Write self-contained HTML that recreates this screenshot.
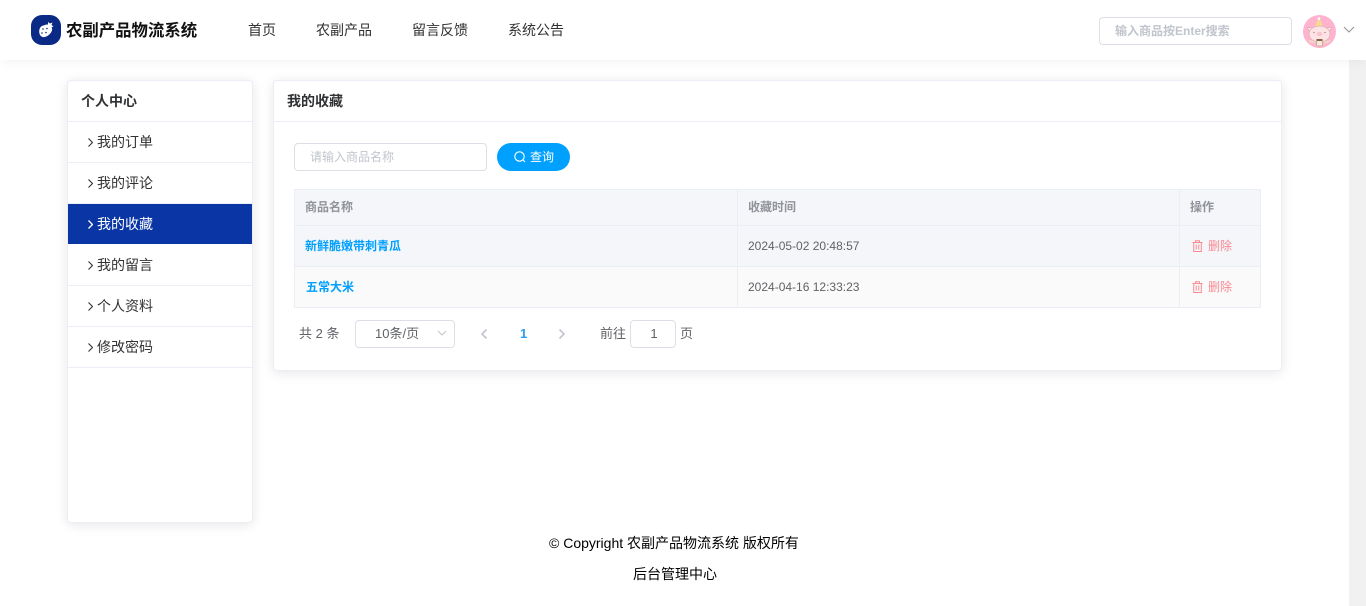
<!DOCTYPE html>
<html lang="zh-CN">
<head>
<meta charset="utf-8">
<title>农副产品物流系统</title>
<style>
html,body{margin:0;padding:0;width:1366px;height:606px;overflow:hidden;background:#fff;}
body{position:relative;font-family:"Liberation Sans","WenQuanYi Zen Hei","Noto Sans CJK SC",sans-serif;font-size:14px;color:#303133;}
.a{position:absolute;white-space:nowrap;}
.box{position:absolute;box-sizing:border-box;}
.sb{position:absolute;left:1349px;top:60px;width:17px;height:546px;background:#f1f1f1;}
.hd{position:absolute;left:0;top:0;width:1366px;height:60px;background:#fff;box-shadow:0 2px 12px rgba(0,0,0,.05);}
.nav{position:absolute;top:20px;line-height:20px;color:#303133;font-size:14px;}
.card{position:absolute;box-sizing:border-box;background:#fff;border:1px solid #ebeef5;border-radius:4px;box-shadow:0 2px 12px rgba(0,0,0,.1);}
.mi{position:absolute;left:0;width:184px;height:41px;box-sizing:border-box;border-bottom:1px solid #ebeef5;line-height:40px;font-size:14px;color:#303133;}
.mi svg{position:absolute;left:20px;top:16px;}
.mi span{position:absolute;left:29px;top:0;}
.mi.on{background:#0a36a5;color:#fff;border-bottom:none;}
.inp{position:absolute;box-sizing:border-box;background:#fff;border:1px solid #dcdfe6;border-radius:4px;color:#c0c4cc;font-size:12px;}
.tl{position:absolute;background:#ebeef5;}
.th{position:absolute;top:199px;line-height:16px;font-size:12px;font-weight:bold;color:#909399;}
.td{position:absolute;line-height:16px;font-size:12px;color:#606266;}
.link{position:absolute;line-height:16px;font-size:12px;font-weight:bold;color:#00a0ff;}
.del{position:absolute;left:1208px;line-height:16px;font-size:12px;color:#f98a94;}
.pg{position:absolute;line-height:16px;font-size:13px;color:#606266;}
</style>
</head>
<body>
<div class="sb"></div>

<div class="card" style="left:67px;top:80px;width:186px;height:443px;">
  <div class="a" style="left:13px;top:12px;line-height:17px;font-size:14px;font-weight:bold;color:#303133;">个人中心</div>
  <div class="tl" style="left:0;top:40px;width:184px;height:1px;"></div>
  <div class="mi" style="top:41px;"><svg width="5" height="9" viewBox="0 0 5 9"><path d="M.5.5l4 4-4 4" fill="none" stroke="#303133" stroke-width="1.1"/></svg><span>我的订单</span></div>
  <div class="mi" style="top:82px;"><svg width="5" height="9" viewBox="0 0 5 9"><path d="M.5.5l4 4-4 4" fill="none" stroke="#303133" stroke-width="1.1"/></svg><span>我的评论</span></div>
  <div class="mi on" style="top:123px;height:40px;"><svg width="5" height="9" viewBox="0 0 5 9"><path d="M.5.5l4 4-4 4" fill="none" stroke="#fff" stroke-width="1.3"/></svg><span>我的收藏</span></div>
  <div class="mi" style="top:164px;"><svg width="5" height="9" viewBox="0 0 5 9"><path d="M.5.5l4 4-4 4" fill="none" stroke="#303133" stroke-width="1.1"/></svg><span>我的留言</span></div>
  <div class="mi" style="top:205px;"><svg width="5" height="9" viewBox="0 0 5 9"><path d="M.5.5l4 4-4 4" fill="none" stroke="#303133" stroke-width="1.1"/></svg><span>个人资料</span></div>
  <div class="mi" style="top:246px;"><svg width="5" height="9" viewBox="0 0 5 9"><path d="M.5.5l4 4-4 4" fill="none" stroke="#303133" stroke-width="1.1"/></svg><span>修改密码</span></div>
</div>

<div class="card" style="left:273px;top:80px;width:1009px;height:291px;">
  <div class="a" style="left:13px;top:12px;line-height:17px;font-size:14px;font-weight:bold;color:#303133;">我的收藏</div>
  <div class="tl" style="left:0;top:40px;width:1007px;height:1px;"></div>
</div>

<div class="inp" style="left:294px;top:143px;width:193px;height:28px;line-height:26px;padding-left:15px;">请输入商品名称</div>
<div class="box" style="left:497px;top:143px;width:73px;height:28px;border-radius:14px;background:#00a0ff;color:#fff;font-size:12px;line-height:28px;">
  <svg style="position:absolute;left:16px;top:7px;" width="14" height="14" viewBox="0 0 14 14"><circle cx="6.500" cy="6.500" r="4.700" fill="none" stroke="#fff" stroke-width="1.100"/><path d="M10 10l2 2" stroke="#fff" stroke-width="1.100"/></svg>
  <span style="position:absolute;left:33px;top:0;">查询</span>
</div>

<div class="box" style="left:294px;top:189px;width:967px;height:119px;background:#f4f6f9;border:1px solid #ebeef5;"></div>
<div class="box" style="left:295px;top:267px;width:965px;height:40px;background:#fafafa;"></div>
<div class="tl" style="left:295px;top:225px;width:965px;height:1px;"></div>
<div class="tl" style="left:295px;top:266px;width:965px;height:1px;"></div>
<div class="tl" style="left:737px;top:190px;width:1px;height:117px;"></div>
<div class="tl" style="left:1179px;top:190px;width:1px;height:117px;"></div>

<div class="th" style="left:305px;">商品名称</div>
<div class="th" style="left:748px;">收藏时间</div>
<div class="th" style="left:1190px;">操作</div>

<div class="link" style="left:305px;top:238px;">新鲜脆嫩带刺青瓜</div>
<div class="td" style="left:748px;top:238px;">2024-05-02 20:48:57</div>
<svg class="a" style="left:1192px;top:240px;" width="11" height="12" viewBox="0 0 11 12"><path d="M.5 2.500h10M3.500 2.500V.8h4v1.700M1.700 2.500v9h7.600v-9M4.200 4.500v5M6.800 4.500v5" fill="none" stroke="#f98a94" stroke-width="1"/></svg>
<div class="del" style="top:238px;">删除</div>

<div class="link" style="left:306px;top:279px;">五常大米</div>
<div class="td" style="left:748px;top:279px;">2024-04-16 12:33:23</div>
<svg class="a" style="left:1192px;top:281px;" width="11" height="12" viewBox="0 0 11 12"><path d="M.5 2.500h10M3.500 2.500V.8h4v1.700M1.700 2.500v9h7.600v-9M4.200 4.500v5M6.800 4.500v5" fill="none" stroke="#f98a94" stroke-width="1"/></svg>
<div class="del" style="top:279px;">删除</div>

<div class="pg" style="left:299px;top:326px;">共 2 条</div>
<div class="inp" style="left:355px;top:320px;width:100px;height:28px;line-height:26px;padding-left:19px;color:#606266;font-size:13px;">10条/页</div>
<svg class="a" style="left:437px;top:330px;" width="10" height="7" viewBox="0 0 10 7"><path d="M1 1l4 4 4-4" fill="none" stroke="#c0c4cc" stroke-width="1"/></svg>
<svg class="a" style="left:480px;top:328px;" width="8" height="12" viewBox="0 0 8 12"><path d="M6.500 1.500L2 6l4.500 4.500" fill="none" stroke="#c0c4cc" stroke-width="1.600"/></svg>
<div class="pg" style="left:520px;top:326px;font-weight:bold;color:#2a9df4;">1</div>
<svg class="a" style="left:558px;top:328px;" width="8" height="12" viewBox="0 0 8 12"><path d="M1.500 1.500L6 6l-4.500 4.500" fill="none" stroke="#c0c4cc" stroke-width="1.600"/></svg>
<div class="pg" style="left:600px;top:326px;">前往</div>
<div class="inp" style="left:630px;top:320px;width:46px;height:28px;line-height:26px;padding-left:2px;text-align:center;color:#606266;font-size:13px;">1</div>
<div class="pg" style="left:680px;top:326px;">页</div>

<div class="a" style="left:549px;top:535px;line-height:16px;font-size:14px;color:#000;">© Copyright 农副产品物流系统 版权所有</div>
<div class="a" style="left:633px;top:566px;line-height:16px;font-size:14px;color:#000;">后台管理中心</div>

<div class="hd"></div>
<svg class="a" style="left:31px;top:15px;" width="30" height="30" viewBox="0 0 30 30">
  <rect width="30" height="30" rx="11" fill="#0a2a85"/>
  <path d="M14 10C18 9 22 12 21 15.500C20 19 15 23 11.500 22C8 21 7.500 15.500 9 13C10 11 12 10.500 14 10z" fill="#fff"/>
  <path d="M14.500 9.500L17 9.500L17 7L19 8.500L21.500 7.500L20.500 10L22.500 11.500L20 12.500z" fill="#fff"/>
  <circle cx="12" cy="14" r=".8" fill="#0a2a85"/><circle cx="16" cy="13.500" r=".8" fill="#0a2a85"/><circle cx="11" cy="18" r=".8" fill="#0a2a85"/><circle cx="15" cy="17.500" r=".8" fill="#0a2a85"/>
</svg>
<div class="a" style="left:66px;top:20px;line-height:22px;font-size:16.400px;font-weight:bold;color:#111;">农副产品物流系统</div>
<div class="a nav" style="left:248px;">首页</div>
<div class="a nav" style="left:316px;">农副产品</div>
<div class="a nav" style="left:412px;">留言反馈</div>
<div class="a nav" style="left:508px;">系统公告</div>
<div class="inp" style="left:1099px;top:17px;width:193px;height:28px;line-height:26px;padding-left:15px;font-size:12px;font-weight:bold;">输入商品按Enter搜索</div>
<svg class="a" style="left:1303px;top:15px;" width="33" height="33" viewBox="0 0 33 33">
  <circle cx="16.500" cy="16.500" r="16.500" fill="#ffb3cf"/>
  <path d="M12 11L16 2.500 20 11z" fill="#f9da8e"/>
  <circle cx="16" cy="3.500" r="1.300" fill="#fff"/>
  <ellipse cx="16.500" cy="19" rx="10.500" ry="8" fill="#fde3e6" stroke="#c9a49c" stroke-width=".5"/>
  <path d="M6 16l-1.500-3.500 5 .5zM27 16l1.500-3.500-5 .5z" fill="#fde3e6" stroke="#c9a49c" stroke-width=".5"/>
  <ellipse cx="16.500" cy="19" rx="3" ry="2" fill="#f9c3cb"/>
  <circle cx="11" cy="17.500" r=".6" fill="#8a6a60"/><circle cx="22" cy="17.500" r=".6" fill="#8a6a60"/>
  <rect x="13.500" y="25" width="6" height="6" rx="1" fill="#f7e9d6" stroke="#a58a70" stroke-width=".5"/>
  <rect x="13.500" y="24" width="6" height="2" fill="#8a6048"/>
  <path d="M6 26l6 1.500M27 26l-6 1.500" stroke="#f0d8c8" stroke-width="2"/>
</svg>
<svg class="a" style="left:1343px;top:26px;" width="12" height="8" viewBox="0 0 12 8"><path d="M1 1l5 5 5-5" fill="none" stroke="#909399" stroke-width="1"/></svg>
</body>
</html>
